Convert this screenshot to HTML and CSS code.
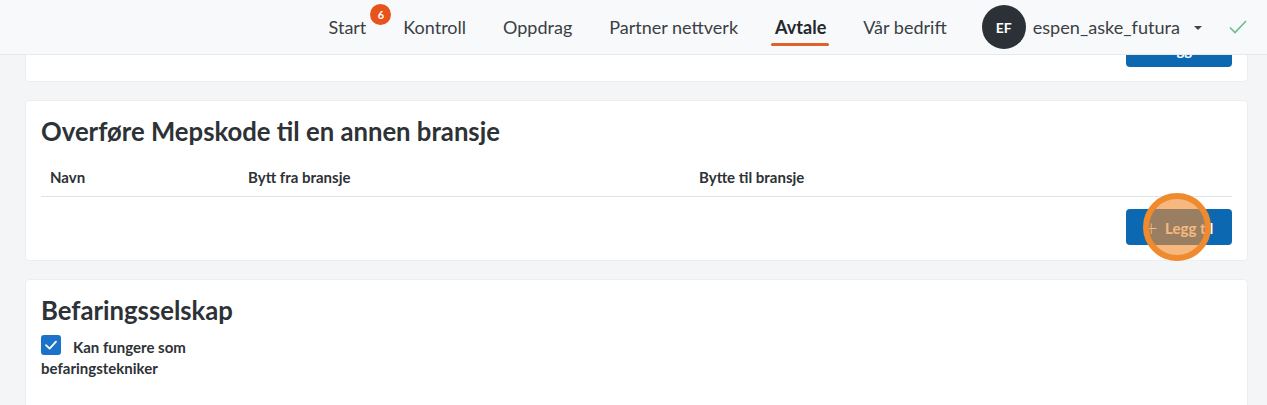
FILE: index.html
```html
<!DOCTYPE html>
<html lang="no">
<head>
<meta charset="utf-8">
<title>Avtale</title>
<link rel="stylesheet" href="styles.css">
</head>
<body>
<header class="topbar">
  <nav class="nav">
    <a class="nav-item">Start<span class="badge">6</span></a>
    <a class="nav-item">Kontroll</a>
    <a class="nav-item">Oppdrag</a>
    <a class="nav-item">Partner nettverk</a>
    <a class="nav-item active">Avtale</a>
    <a class="nav-item">Vår bedrift</a>
  </nav>
  <div class="user">
    <span class="avatar">EF</span>
    <span class="username">espen_aske_futura</span>
    <span class="caret"></span>
  </div>
  <svg class="check" width="20" height="16" viewBox="0 0 20 16"><path d="M2 8.5 L7 13.5 L18 2" fill="none" stroke="#6dbb8a" stroke-width="1.6"/></svg>
</header>

<main class="content">
  <section class="card card-top">
    <div class="actions"><button class="btn">+ Legg til</button></div>
  </section>

  <section class="card">
    <h2 class="card-title">Overføre Mepskode til en annen bransje</h2>
    <div class="table-head">
      <span class="col col-name">Navn</span>
      <span class="col col-from">Bytt fra bransje</span>
      <span class="col col-to">Bytte til bransje</span>
    </div>
    <div class="actions">
      <button class="btn"><span class="plus">+</span> Legg til</button>
      <span class="click-ring"></span>
    </div>
  </section>

  <section class="card card-last">
    <h2 class="card-title">Befaringsselskap</h2>
    <div class="check-field">
      <span class="checkbox"><svg width="20" height="20" viewBox="0 0 20 20"><path d="M5 10.2 L8.6 13.6 L15 6.6" fill="none" stroke="#fff" stroke-width="1.8" stroke-linecap="round" stroke-linejoin="round"/></svg></span><span class="check-label">Kan fungere som befaringstekniker</span>
    </div>
  </section>
</main>
</body>
</html>
```

FILE: styles.css
```css
* { box-sizing: border-box; }
html, body { margin: 0; padding: 0; }
body {
  background: #f4f5f7;
  font-family: "Lato", "Noto Sans", sans-serif;
  color: #2d3236;
  height: 405px;
  overflow: hidden;
}
.topbar {
  position: fixed;
  top: 0; left: 0; right: 0;
  height: 55px;
  background: #f8f9fa;
  border-bottom: 1px solid #e6e8eb;
  display: flex;
  align-items: center;
  justify-content: flex-end;
  padding-right: 19px;
  z-index: 10;
}
.nav { display: flex; gap: 37px; height: 100%; align-items: center; }
.nav-item {
  position: relative;
  font-size: 18px;
  color: #3a3f44;
  line-height: 24px;
}
.nav-item.active { font-weight: 700; color: #23282c; }
.nav-item.active::after {
  content: "";
  position: absolute;
  left: -4px; right: -3px;
  top: 28px;
  height: 3px;
  background: #e0622b;
  border-radius: 2px;
}
.badge {
  position: absolute;
  right: -25px; top: -11px;
  width: 21px; height: 21px;
  border-radius: 50%;
  background: #e8531b;
  color: #fff;
  font-size: 11px;
  font-weight: 700;
  display: flex; align-items: center; justify-content: center;
  line-height: 1;
}
.user { display: flex; align-items: center; margin-left: 35px; }
.avatar {
  width: 44px; height: 44px;
  border-radius: 50%;
  background: #2b3136;
  color: #fff;
  font-weight: 700;
  font-size: 14px;
  display: flex; align-items: center; justify-content: center;
}
.username { margin-left: 7px; font-size: 18.1px; color: #3a3f44; }
.caret {
  margin-left: 14px;
  width: 0; height: 0;
  border-left: 4px solid transparent;
  border-right: 4px solid transparent;
  border-top: 4px solid #444;
  margin-top: 2px;
}
.check { margin-left: 26px; }

.content {
  padding: 0 19px 0 25px;
  display: flex;
  flex-direction: column;
  gap: 18px;
  margin-top: 15px;
}
.card {
  background: #fff;
  border-radius: 4px;
  border: 1px solid #eceef0;
  padding: 14px 15px 15px 15px;
  position: relative;
}
.card-top { padding-top: 15px; padding-bottom: 14px; }
.card-last { padding-bottom: 40px; }
.card-title {
  margin: 0;
  font-size: 25.7px;
  font-weight: 700;
  line-height: 32px;
  color: #2d3236;
}
.table-head {
  margin-top: 15px;
  display: flex;
  height: 35px;
  align-items: center;
  border-bottom: 1px solid #dfe3e7;
  font-size: 15px;
  font-weight: 700;
  color: #2d3236;
  padding-bottom: 5px;
}
.col-name { width: 207px; padding-left: 9px; }
.col-from { width: 451px; }
.actions {
  display: flex;
  justify-content: flex-end;
  position: relative;
}
.card .table-head + .actions { margin-top: 12px; }
.btn {
  width: 106px; height: 36px;
  background: #0b68b1;
  color: #fff;
  border: none;
  border-radius: 4px;
  font-family: inherit;
  font-size: 15px;
  font-weight: 700;
}
.plus { font-weight: 300; font-size: 22px; margin-right: 4px; vertical-align: -2px; }
.click-ring {
  position: absolute;
  right: 21px;
  top: -16px;
  width: 68px; height: 68px;
  border-radius: 50%;
  border: 6px solid #ef8a2e;
  background: rgba(241, 140, 48, 0.62);
}
.check-field {
  margin-top: 9px;
  width: 190px;
  font-size: 15px;
  font-weight: 700;
  line-height: 21px;
}
.checkbox {
  display: inline-block;
  width: 20px; height: 20px;
  background: #1a73c8;
  border-radius: 3px;
  vertical-align: -2px;
  margin-right: 12px;
}
.checkbox svg { display: block; }
```
